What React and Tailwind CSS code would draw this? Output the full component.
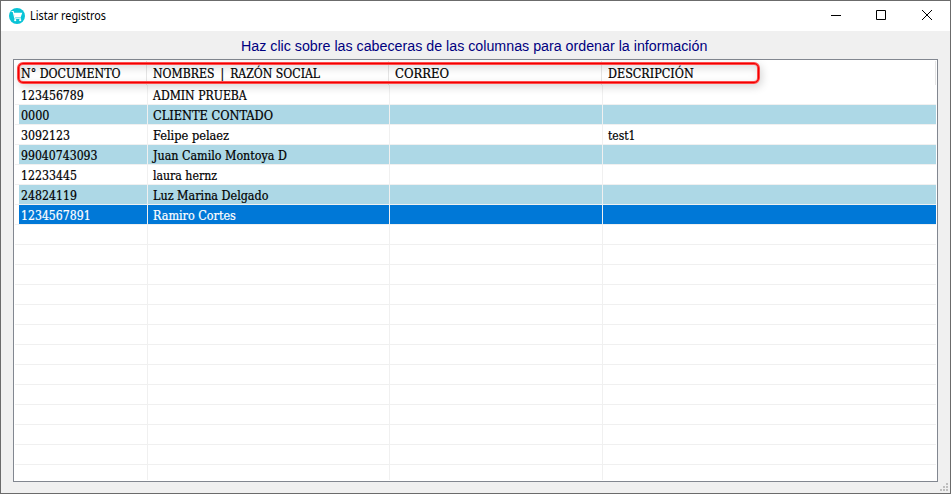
import { useLayoutEffect, useRef, useState } from "react";

// Text squeezed or stretched horizontally to a given width.
function Fit({ w, children, className = "" }) {
  const ref = useRef(null);
  const [scale, setScale] = useState(1);
  useLayoutEffect(() => {
    setScale(w / ref.current.offsetWidth);
  }, [w]);
  return (
    <span
      ref={ref}
      className={"inline-block origin-left whitespace-pre " + className}
      style={{ transform: `scaleX(${scale})` }}
    >
      {children}
    </span>
  );
}

const rows = [
  [["123456789", 63], ["ADMIN PRUEBA", 94], null],
  [["0000", 28], ["CLIENTE CONTADO", 120], null],
  [["3092123", 49], ["Felipe pelaez", 76], ["test1", 27]],
  [["99040743093", 77], ["Juan Camilo Montoya D", 134], null],
  [["12233445", 56], ["laura hernz", 64], null],
  [["24824119", 56], ["Luz Marina Delgado", 115], null],
  [["1234567891", 70], ["Ramiro Cortes", 83], null],
];

const header = [
  ["N° DOCUMENTO", 100],
  [<>NOMBRES<span className="px-[2.5px]"> | </span>RAZÓN SOCIAL</>, 167],
  ["CORREO", 54],
  ["DESCRIPCIÓN", 86],
];

function Cell({ item }) {
  return item ? <Fit w={item[1]}>{item[0]}</Fit> : null;
}

function Row({ data, index }) {
  const selected = index === 6;
  const bg = !data ? "" : selected ? "bg-[#0078d7] text-white" : index % 2 ? "bg-[#add8e6]" : "";
  return (
    <div className="ml-px mr-px h-5 shrink-0 border-b border-[#f0f0f0] pl-1">
      <div className={"grid h-[19px] grid-cols-[129px_242px_213px_1fr] leading-[23px] " + bg}>
        <div className="h-[19px] border-r border-[#f0f0f0] pl-0.5">{data && <Cell item={data[0]} />}</div>
        <div className="h-[19px] border-r border-[#f0f0f0] pl-[5px]">{data && <Cell item={data[1]} />}</div>
        <div className="h-[19px] border-r border-[#f0f0f0]" />
        <div className="h-[19px] pl-[5px]">{data && <Cell item={data[2]} />}</div>
      </div>
    </div>
  );
}

export default function App() {
  return (
    <div className="flex h-[494px] w-[951px] flex-col overflow-hidden border border-[#6b6b6b] bg-[#f0f0f0] font-['Noto_Sans',sans-serif] text-black">
      <div className="flex h-[30px] shrink-0 items-center bg-white pl-2">
        <svg width="16" height="16" viewBox="0 0 16 16" className="mr-[5px] -mt-px">
          <circle cx="8" cy="8" r="8" fill="#09c3d6" />
          <path d="M2.5 3.5h1.7l1.6 6.6h6.2" fill="none" stroke="#fff" strokeWidth="1.1" />
          <path d="M4.7 4.7h8.6l-1.5 4.4H5.8z" fill="#fff" />
          <circle cx="6.2" cy="12.2" r="1.1" fill="#fff" />
          <circle cx="11.2" cy="12.2" r="1.1" fill="#fff" />
        </svg>
        <Fit w={76} className="text-[12px] leading-[28px]">Listar registros</Fit>
        <svg width="102" height="12" viewBox="0 0 102 12" className="ml-auto mr-[17px] -mt-0.5" fill="none" stroke="#000">
          <path d="M0 6.5h10" />
          <path d="M45.5 1.5h9v9h-9z" />
          <path d="M91 1l10 10M101 1l-10 10" />
        </svg>
      </div>
      <div className="h-7 shrink-0 pl-[240px] font-['Liberation_Sans',sans-serif] text-[14px] leading-[30px] text-[#000080]">
        <Fit w={466}>Haz clic sobre las cabeceras de las columnas para ordenar la información</Fit>
      </div>
      <div className="relative ml-3 flex h-[423px] w-[925px] shrink-0 flex-col border border-[#828790] bg-white font-['DejaVu_Serif_Condensed','DejaVu_Serif',serif] text-[12px] [-webkit-text-stroke:0.2px_currentColor]">
        <div className="mt-px mr-px grid h-6 shrink-0 grid-cols-[133px_242px_213px_1fr] leading-[27px]">
          {header.map((h, i) => (
            <div key={i} className={"h-6 border-r border-[#e5e5e5] " + (i ? "pl-1.5" : "pl-[7px]")}>
              <Fit w={h[1]}>{h[0]}</Fit>
            </div>
          ))}
        </div>
        <div className="flex h-[395px] flex-col overflow-hidden bg-[linear-gradient(#f0f0f0,#f0f0f0),linear-gradient(#f0f0f0,#f0f0f0),linear-gradient(#f0f0f0,#f0f0f0)] bg-[length:1px_100%] bg-[position:133px_0,375px_0,588px_0] bg-no-repeat">
          {Array.from({ length: 20 }, (_, i) => (
            <Row key={i} data={rows[i]} index={i} />
          ))}
        </div>
        <div className="pointer-events-none absolute left-[3px] top-[2px] h-[22px] w-[743px] rounded-[6px] border-[3px] border-[#ff4a4a] shadow-[2px_3px_8px_rgba(0,0,0,0.16),inset_2px_3px_8px_rgba(0,0,0,0.14)]">
          <div className="absolute -inset-[2px] rounded-[5px] border border-[#f00000]" />
        </div>
      </div>
      <svg width="8" height="8" viewBox="0 0 8 8" className="ml-auto mr-0.5 mt-px shrink-0" fill="#bfbfbf">
        <path d="M6 0h2v2H6zM3 3h2v2H3zM6 3h2v2H6zM0 6h2v2H0zM3 6h2v2H3zM6 6h2v2H6z" />
      </svg>
    </div>
  );
}
